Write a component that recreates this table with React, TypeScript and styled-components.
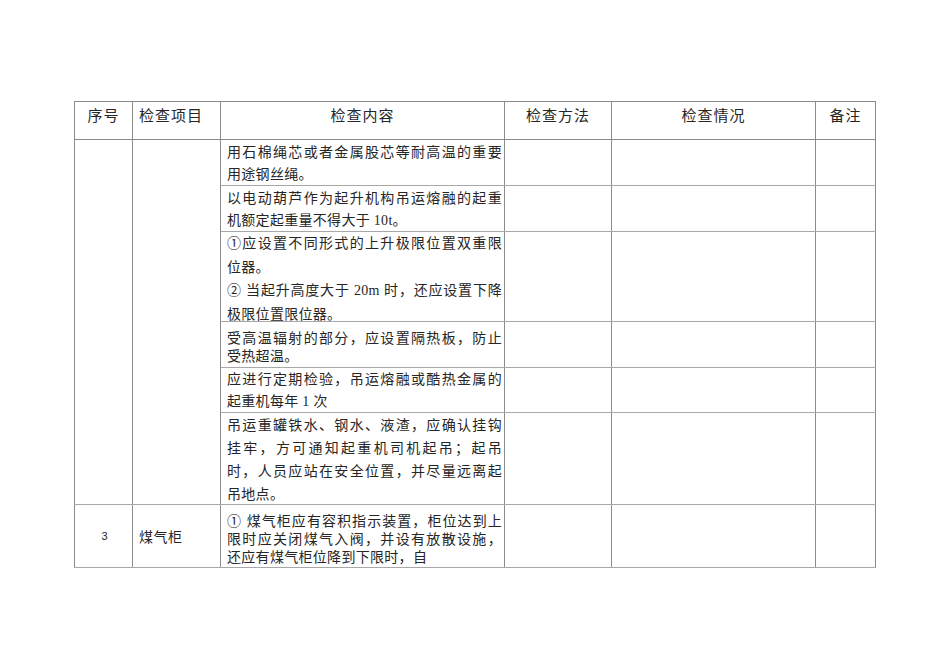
import React from "react";
import styled, { createGlobalStyle } from "styled-components";

const GlobalStyle = createGlobalStyle`
  html, body {
    margin: 0;
    padding: 0;
    background: #ffffff;
  }
  body {
    font-family: "Liberation Serif", "Noto Sans CJK SC", serif;
    color: #262626;
  }
`;

type TextLine = { text: string; full?: boolean };

type Row = {
  height: number;
  pad: number;
  lh: number;
  lines: TextLine[];
};

const rows: Row[] = [
  {
    height: 46,
    pad: 2,
    lh: 22,
    lines: [
      { text: "用石棉绳芯或者金属股芯等耐高温的重要", full: true },
      { text: "用途钢丝绳。" },
    ],
  },
  {
    height: 46,
    pad: 2,
    lh: 22,
    lines: [
      { text: "以电动葫芦作为起升机构吊运熔融的起重", full: true },
      { text: "机额定起重量不得大于 10t。" },
    ],
  },
  {
    height: 90,
    pad: 0,
    lh: 23.5,
    lines: [
      { text: "①应设置不同形式的上升极限位置双重限", full: true },
      { text: "位器。" },
      { text: "② 当起升高度大于 20m 时，还应设置下降", full: true },
      { text: "极限位置限位器。" },
    ],
  },
  {
    height: 46,
    pad: 8,
    lh: 18,
    lines: [
      { text: "受高温辐射的部分，应设置隔热板，防止", full: true },
      { text: "受热超温。" },
    ],
  },
  {
    height: 45,
    pad: 1,
    lh: 22,
    lines: [
      { text: "应进行定期检验，吊运熔融或酷热金属的", full: true },
      { text: "起重机每年 1 次" },
    ],
  },
  {
    height: 92,
    pad: 1,
    lh: 23,
    lines: [
      { text: "吊运重罐铁水、钢水、液渣，应确认挂钩", full: true },
      { text: "挂牢，方可通知起重机司机起吊；起吊", full: true },
      { text: "时，人员应站在安全位置，并尽量远离起", full: true },
      { text: "吊地点。" },
    ],
  },
];

const gasRow: Row = {
  height: 63,
  pad: 8,
  lh: 18,
  lines: [
    { text: "① 煤气柜应有容积指示装置，柜位达到上", full: true },
    { text: "限时应关闭煤气入阀，并设有放散设施，", full: true },
    { text: "还应有煤气柜位降到下限时，自" },
  ],
};

function Content({ row }: { row: Row }) {
  return (
    <ContentCell>
      <ContentBox $height={row.height - 1} $pad={row.pad}>
        {row.lines.map((l, j) => (
          <Line key={j} $full={!!l.full} $lh={row.lh}>
            {l.text}
          </Line>
        ))}
      </ContentBox>
    </ContentCell>
  );
}

export default function App() {
  return (
    <>
      <GlobalStyle />
      <Page>
        <Sheet>
          <colgroup>
            <col style={{ width: 58 }} />
            <col style={{ width: 88 }} />
            <col style={{ width: 284 }} />
            <col style={{ width: 107 }} />
            <col style={{ width: 204 }} />
            <col style={{ width: 60 }} />
          </colgroup>
          <thead>
            <HeadRow>
              <HeadCell $align="center">序号</HeadCell>
              <HeadCell $align="left">检查项目</HeadCell>
              <HeadCell $align="center">检查内容</HeadCell>
              <HeadCell $align="center">检查方法</HeadCell>
              <HeadCell $align="center">检查情况</HeadCell>
              <HeadCell $align="center">备注</HeadCell>
            </HeadRow>
          </thead>
          <tbody>
            {rows.map((row, i) => (
              <BodyRow key={i} $height={row.height}>
                {i === 0 && (
                  <>
                    <NumCell rowSpan={rows.length} />
                    <ItemCell rowSpan={rows.length} />
                  </>
                )}
                <Content row={row} />
                <EmptyCell />
                <EmptyCell />
                <EmptyCell />
              </BodyRow>
            ))}
            <BodyRow $height={gasRow.height}>
              <NumCell>3</NumCell>
              <ItemCell>煤气柜</ItemCell>
              <Content row={gasRow} />
              <EmptyCell />
              <EmptyCell />
              <EmptyCell />
            </BodyRow>
          </tbody>
        </Sheet>
      </Page>
    </>
  );
}

const Page = styled.div`
  width: 950px;
  height: 672px;
  padding: 101px 0 0 74px;
  box-sizing: border-box;
  overflow: hidden;
`;

const Sheet = styled.table`
  width: 801px;
  table-layout: fixed;
  border-collapse: collapse;

  td,
  th {
    border: 1px solid #8a8a8a;
    padding: 0;
  }
`;

const HeadRow = styled.tr`
  height: 38px;
`;

const HeadCell = styled.th<{ $align: "left" | "center" }>`
  font-weight: normal;
  font-size: 15px;
  line-height: 20px;
  vertical-align: top;
  padding: 4px 0 0 ${({ $align }) => ($align === "left" ? "6px" : "0")} !important;
  text-align: ${({ $align }) => $align};
  color: #262626;
  letter-spacing: 1px;
`;

const BodyRow = styled.tr<{ $height: number }>`
  height: ${({ $height }) => $height}px;

  td {
    border-top-color: #a8a8a8;
    border-bottom-color: #a8a8a8;
  }
`;

const NumCell = styled.td`
  font-family: "Liberation Sans", sans-serif;
  font-size: 11px;
  text-align: center;
  vertical-align: middle;
  padding-left: 2px !important;
`;

const ItemCell = styled.td`
  font-size: 14px;
  text-align: left;
  vertical-align: middle;
  padding-left: 6px !important;
  letter-spacing: 0.5px;
`;

const ContentCell = styled.td`
  vertical-align: top;
  padding: 0 2px 0 6px !important;
`;

const ContentBox = styled.div<{ $height: number; $pad: number }>`
  height: ${({ $height }) => $height}px;
  padding-top: ${({ $pad }) => $pad}px;
  box-sizing: border-box;
  font-size: 14px;
`;

const Line = styled.div<{ $full: boolean; $lh: number }>`
  height: ${({ $lh }) => $lh}px;
  line-height: ${({ $lh }) => $lh}px;
  white-space: nowrap;
  text-align: ${({ $full }) => ($full ? "justify" : "left")};
  text-align-last: ${({ $full }) => ($full ? "justify" : "left")};
  letter-spacing: 0.3px;
`;

const EmptyCell = styled.td``;
